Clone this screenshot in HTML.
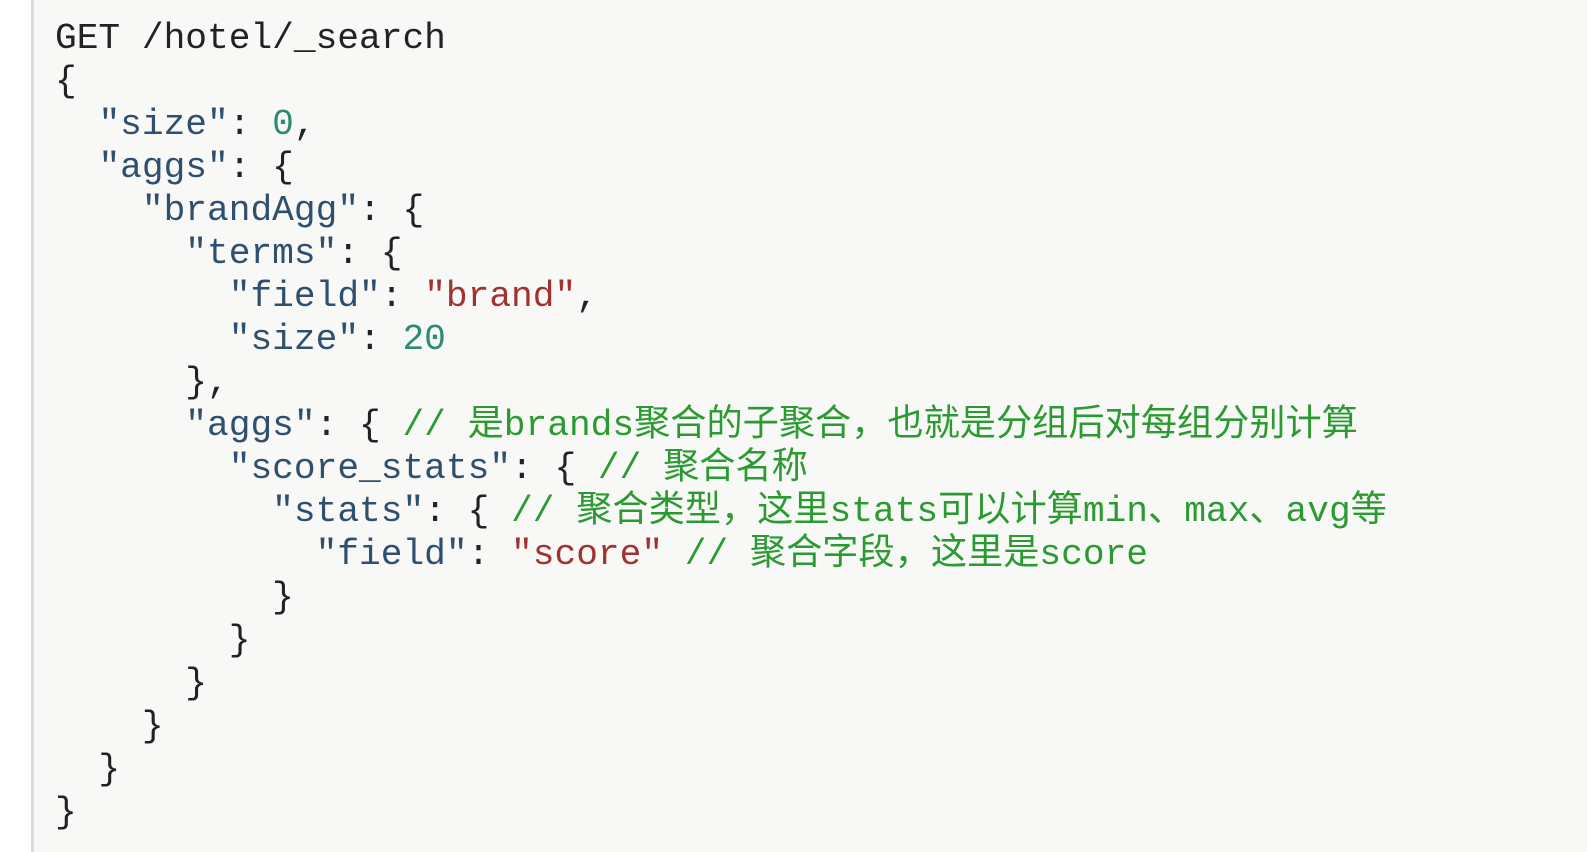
<!DOCTYPE html>
<html><head><meta charset="utf-8"><style>
html,body{margin:0;padding:0;}
body{width:1587px;height:852px;overflow:hidden;background:#f8f9f6;position:relative;}
.left{position:absolute;left:0;top:0;width:31px;height:852px;background:#ffffff;}
.rule{position:absolute;left:31px;top:0;width:3px;height:852px;background:#dcdcdc;}
pre{position:absolute;left:55px;top:17px;margin:0;font-family:"Liberation Mono","Noto Sans CJK SC",monospace;font-size:36.2px;line-height:43px;color:#222;}
.k{color:#2f4f6f}.n{color:#2e8b6b}.s{color:#a03232}.c{color:#2c9a32}
</style></head><body>
<div class="left"></div><div class="rule"></div>
<pre>GET /hotel/_search
{
  <span class="k">"size"</span>: <span class="n">0</span>,
  <span class="k">"aggs"</span>: {
    <span class="k">"brandAgg"</span>: {
      <span class="k">"terms"</span>: {
        <span class="k">"field"</span>: <span class="s">"brand"</span>,
        <span class="k">"size"</span>: <span class="n">20</span>
      },
      <span class="k">"aggs"</span>: { <span class="c">// 是brands聚合的子聚合，也就是分组后对每组分别计算</span>
        <span class="k">"score_stats"</span>: { <span class="c">// 聚合名称</span>
          <span class="k">"stats"</span>: { <span class="c">// 聚合类型，这里stats可以计算min、max、avg等</span>
            <span class="k">"field"</span>: <span class="s">"score"</span> <span class="c">// 聚合字段，这里是score</span>
          }
        }
      }
    }
  }
}</pre>
</body></html>
